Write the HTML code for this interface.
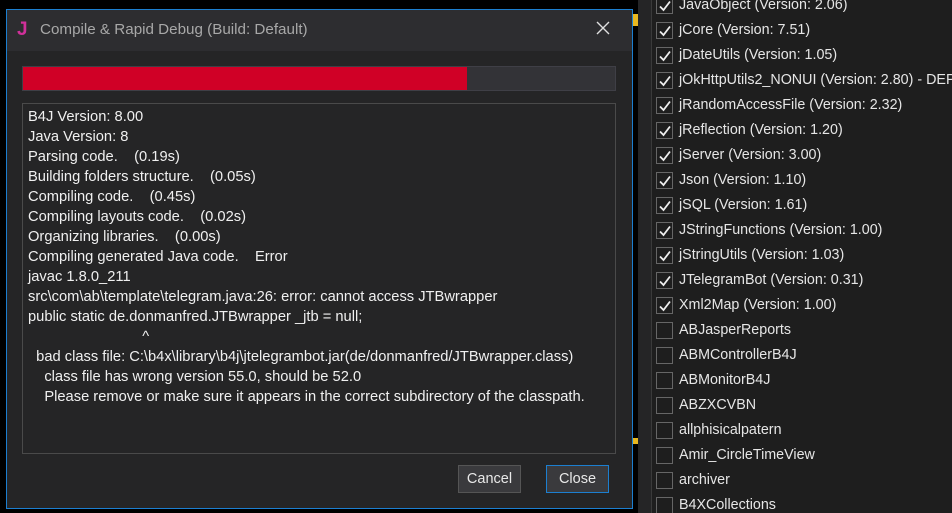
<!DOCTYPE html>
<html><head><meta charset="utf-8"><style>
*{margin:0;padding:0;box-sizing:border-box}
body{width:952px;height:513px;background:#000;position:relative;overflow:hidden;font-family:"Liberation Sans",sans-serif;color:#f0f0f0}
.dlg{position:absolute;left:6px;top:9px;width:627px;height:500px;border:1px solid #1c7fd0;background:#252526}
.title{position:absolute;left:0;top:0;width:625px;height:41px;background:#2d2d30}
.title .j{position:absolute;left:10px;top:9px;color:#d0309a;font-weight:bold;font-size:19px}
.title .t{position:absolute;left:33px;top:11px;color:#a8a8a8;font-size:15.2px}
.title .x{position:absolute;left:588px;top:10px}
.prog{position:absolute;left:15px;top:56px;width:594px;height:25px;background:#333337;border:1px solid #3f3f46}
.prog div{width:444px;height:23px;background:#d00026}
.log{position:absolute;left:15px;top:93px;width:594px;height:351px;border:1px solid #4a4a4a;background:#252526;padding:3px 0 0 5px;font-size:14.7px;line-height:20px;white-space:pre;color:#f0f0f0}
.btn{position:absolute;top:455px;height:28px;background:#3a3a3d;border:1px solid #555;font-size:14.5px;color:#e8e8e8;text-align:center;line-height:26px}
.right{position:absolute;left:638px;top:0;width:14px;height:513px;background:#252526;border-right:1px solid #3a3a3a}
.panel{position:absolute;left:652px;top:0;width:300px;height:513px;background:#1e1e1e;overflow:hidden}
.row{position:absolute;left:4px;height:25px;font-size:14.3px;color:#e6e6e6;white-space:nowrap}
.cb{position:absolute;left:0;top:3px;width:17px;height:17px;border:1px solid #666;background:#1e1e1e}
.cb svg{position:absolute;left:1px;top:1px}
.row span{position:absolute;left:23px;top:3px}
.y{position:absolute;left:633px;width:5px;background:#e8b820}
</style></head><body>
<div class="y" style="top:14px;height:12px"></div>
<div class="y" style="top:438px;height:6px"></div>
<div class="right"></div>
<div class="panel">
<div class="row" style="top:-6px"><div class="cb"><svg width="14" height="14"><path d="M2 7.5 L5.5 11 L12 2.5" stroke="#eee" stroke-width="1.8" fill="none"/></svg></div><span>JavaObject (Version: 2.06)</span></div>
<div class="row" style="top:19px"><div class="cb"><svg width="14" height="14"><path d="M2 7.5 L5.5 11 L12 2.5" stroke="#eee" stroke-width="1.8" fill="none"/></svg></div><span>jCore (Version: 7.51)</span></div>
<div class="row" style="top:44px"><div class="cb"><svg width="14" height="14"><path d="M2 7.5 L5.5 11 L12 2.5" stroke="#eee" stroke-width="1.8" fill="none"/></svg></div><span>jDateUtils (Version: 1.05)</span></div>
<div class="row" style="top:69px"><div class="cb"><svg width="14" height="14"><path d="M2 7.5 L5.5 11 L12 2.5" stroke="#eee" stroke-width="1.8" fill="none"/></svg></div><span>jOkHttpUtils2_NONUI (Version: 2.80) - DEPRECATED</span></div>
<div class="row" style="top:94px"><div class="cb"><svg width="14" height="14"><path d="M2 7.5 L5.5 11 L12 2.5" stroke="#eee" stroke-width="1.8" fill="none"/></svg></div><span>jRandomAccessFile (Version: 2.32)</span></div>
<div class="row" style="top:119px"><div class="cb"><svg width="14" height="14"><path d="M2 7.5 L5.5 11 L12 2.5" stroke="#eee" stroke-width="1.8" fill="none"/></svg></div><span>jReflection (Version: 1.20)</span></div>
<div class="row" style="top:144px"><div class="cb"><svg width="14" height="14"><path d="M2 7.5 L5.5 11 L12 2.5" stroke="#eee" stroke-width="1.8" fill="none"/></svg></div><span>jServer (Version: 3.00)</span></div>
<div class="row" style="top:169px"><div class="cb"><svg width="14" height="14"><path d="M2 7.5 L5.5 11 L12 2.5" stroke="#eee" stroke-width="1.8" fill="none"/></svg></div><span>Json (Version: 1.10)</span></div>
<div class="row" style="top:194px"><div class="cb"><svg width="14" height="14"><path d="M2 7.5 L5.5 11 L12 2.5" stroke="#eee" stroke-width="1.8" fill="none"/></svg></div><span>jSQL (Version: 1.61)</span></div>
<div class="row" style="top:219px"><div class="cb"><svg width="14" height="14"><path d="M2 7.5 L5.5 11 L12 2.5" stroke="#eee" stroke-width="1.8" fill="none"/></svg></div><span>JStringFunctions (Version: 1.00)</span></div>
<div class="row" style="top:244px"><div class="cb"><svg width="14" height="14"><path d="M2 7.5 L5.5 11 L12 2.5" stroke="#eee" stroke-width="1.8" fill="none"/></svg></div><span>jStringUtils (Version: 1.03)</span></div>
<div class="row" style="top:269px"><div class="cb"><svg width="14" height="14"><path d="M2 7.5 L5.5 11 L12 2.5" stroke="#eee" stroke-width="1.8" fill="none"/></svg></div><span>JTelegramBot (Version: 0.31)</span></div>
<div class="row" style="top:294px"><div class="cb"><svg width="14" height="14"><path d="M2 7.5 L5.5 11 L12 2.5" stroke="#eee" stroke-width="1.8" fill="none"/></svg></div><span>Xml2Map (Version: 1.00)</span></div>
<div class="row" style="top:319px"><div class="cb"></div><span>ABJasperReports</span></div>
<div class="row" style="top:344px"><div class="cb"></div><span>ABMControllerB4J</span></div>
<div class="row" style="top:369px"><div class="cb"></div><span>ABMonitorB4J</span></div>
<div class="row" style="top:394px"><div class="cb"></div><span>ABZXCVBN</span></div>
<div class="row" style="top:419px"><div class="cb"></div><span>allphisicalpatern</span></div>
<div class="row" style="top:444px"><div class="cb"></div><span>Amir_CircleTimeView</span></div>
<div class="row" style="top:469px"><div class="cb"></div><span>archiver</span></div>
<div class="row" style="top:494px"><div class="cb"></div><span>B4XCollections</span></div>
</div>
<div class="dlg">
<div class="title"><div class="j">J</div><div class="t">Compile &amp; Rapid Debug (Build: Default)</div>
<svg class="x" width="16" height="16" viewBox="0 0 16 16"><path d="M2 2L14 14M14 2L2 14" stroke="#e0e0e0" stroke-width="1.4"/></svg></div>
<div class="prog"><div></div></div>
<div class="log">B4J Version: 8.00
Java Version: 8
Parsing code.    (0.19s)
Building folders structure.    (0.05s)
Compiling code.    (0.45s)
Compiling layouts code.    (0.02s)
Organizing libraries.    (0.00s)
Compiling generated Java code.    Error
javac 1.8.0_211
src\com\ab\template\telegram.java:26: error: cannot access JTBwrapper
public static de.donmanfred.JTBwrapper _jtb = null;
                            ^
  bad class file: C:\b4x\library\b4j\jtelegrambot.jar(de/donmanfred/JTBwrapper.class)
    class file has wrong version 55.0, should be 52.0
    Please remove or make sure it appears in the correct subdirectory of the classpath.</div>
<div class="btn" style="left:451px;width:63px">Cancel</div>
<div class="btn" style="left:539px;width:63px;border-color:#1c7fd0">Close</div>
</div>
</body></html>
